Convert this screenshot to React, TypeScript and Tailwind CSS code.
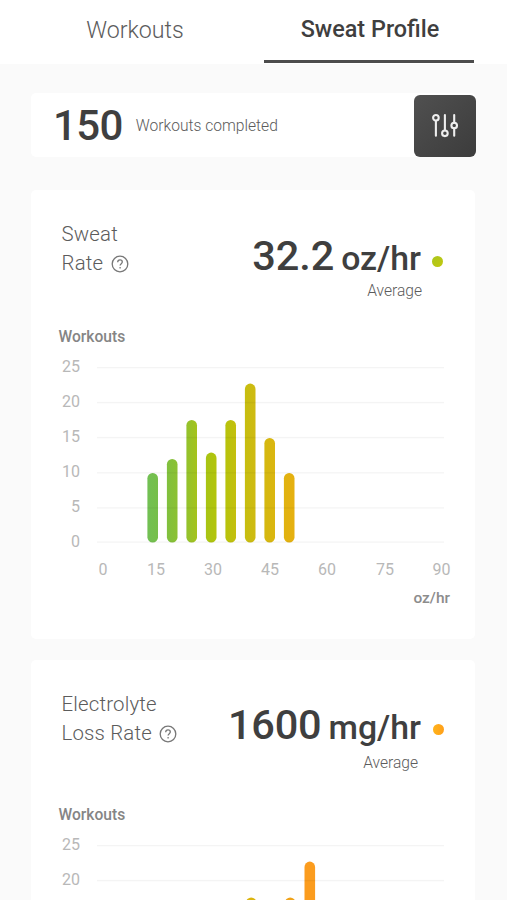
import React from "react";

type Bar = { x: number; top: number; from: string; to: string };

const sweatBars: Bar[] = [
  { x: 50.4, top: 106, from: "#72c054", to: "#76bf4a" },
  { x: 69.9, top: 92, from: "#80c03f", to: "#8cc132" },
  { x: 89.4, top: 53, from: "#93c22e", to: "#a5c31c" },
  { x: 108.9, top: 85.6, from: "#a8c414", to: "#b3c40c" },
  { x: 128.4, top: 53, from: "#b7c30c", to: "#c4bf0e" },
  { x: 147.9, top: 16.6, from: "#c6be10", to: "#cfba12" },
  { x: 167.4, top: 71, from: "#d4b810", to: "#dbb610" },
  { x: 186.9, top: 106, from: "#e0b310", to: "#e6b010" },
];

const electrolyteBars: Bar[] = [
  { x: 148.9, top: 52.5, from: "#dcb50f", to: "#dcb50f" },
  { x: 187.9, top: 52.5, from: "#f0a31a", to: "#f0a31a" },
  { x: 207.5, top: 16.6, from: "#fb9c1e", to: "#fb9c1e" },
];

function HelpIcon() {
  return (
    <svg className="h-[18px] w-[18px]" viewBox="0 0 18 18" fill="none" stroke="#777" strokeWidth="1.3">
      <circle cx="9" cy="9" r="7.8" />
      <path d="M6.7 7.2c0-1.4.9-2.3 2.3-2.3s2.3.8 2.3 2.1c0 1.6-2.2 1.8-2.2 3.6" />
      <path d="M9.1 12v1.4" />
    </svg>
  );
}

function SlidersIcon() {
  return (
    <svg className="h-7 w-7" viewBox="0 0 28 28" fill="none" stroke="#eee" strokeWidth="2.1" strokeLinecap="round">
      <circle cx="4.9" cy="5.8" r="2.8" />
      <path d="M4.9 8.8v15" />
      <circle cx="13.9" cy="21.3" r="2.8" />
      <path d="M13.9 3v15.3" />
      <circle cx="23.2" cy="13.5" r="2.8" />
      <path d="M23.2 3v7.6M23.2 16.4v7.4" />
    </svg>
  );
}

function Plot({ id, bars }: { id: string; bars: Bar[] }) {
  return (
    <svg className="block h-[178px] w-[347px]" viewBox="0 0 347 178">
      <defs>
        {bars.map((b, i) => (
          <linearGradient key={i} id={`${id}-${i}`} x1="0" x2="1" y1="0" y2="0">
            <stop offset="0" stopColor={b.from} />
            <stop offset="1" stopColor={b.to} />
          </linearGradient>
        ))}
      </defs>
      {bars.map((b, i) => (
        <rect key={i} x={b.x} y={b.top} width="10.6" height={175.5 - b.top} rx="5.3" fill={`url(#${id}-${i})`} />
      ))}
      {[0.5, 35.5, 70.5, 105.7, 140.8, 175].map((y) => (
        <rect key={y} x="0" y={y - 0.6} width="347" height="1.4" fill="#000" fillOpacity="0.045" />
      ))}
    </svg>
  );
}

type CardProps = {
  id: string;
  title: [string, string];
  value: React.ReactNode;
  unit: string;
  dot: React.ReactNode;
  average: React.ReactNode;
  heading: React.ReactNode;
  ticks: number[];
  axis?: React.ReactNode;
  bars: Bar[];
};

function MetricCard({ id, title, value, unit, dot, average, heading, ticks, axis, bars }: CardProps) {
  return (
    <section className="h-[449px] w-[444px] shrink-0 rounded-[5px] bg-white">
      <div className="flex h-[132px] justify-between pl-[30.5px] pt-[30px]">
        <div className="text-[20.4px] font-light leading-[29px] tracking-[0.18px] text-[#5c5c5c]">
          <div>{title[0]}</div>
          <div className="flex items-center gap-[7.5px]">
            {title[1]}
            <HelpIcon />
          </div>
        </div>
        <div className="flex flex-col items-end">
          <div className="flex">
            <div className="flex items-baseline gap-[7px] leading-[50px] text-[#3f3f3f]">
              {value}
              <span className="text-[33.8px] font-medium">{unit}</span>
            </div>
            {dot}
          </div>
          {average}
        </div>
      </div>
      {heading}
      <div className="flex">
        <div className="-mt-[10px] w-[49px] text-right text-[16px] leading-[20px] text-[#b8b8b8]">
          {ticks.map((n) => (
            <div key={n} className="mb-[15.1px]">{n}</div>
          ))}
        </div>
        <div className="ml-[17px] w-[347px]">
          <Plot id={id} bars={bars} />
          {axis}
        </div>
      </div>
    </section>
  );
}

function SweatAxis() {
  return (
    <>
      <div className="-ml-[12px] mt-[15px] flex w-[375px] text-center text-[16px] leading-[20px] text-[#b8b8b8]">
        <span className="w-[36px]">0</span>
        <span className="ml-[17px] w-[36px]">15</span>
        <span className="ml-[21px] w-[36px]">30</span>
        <span className="ml-[21px] w-[36px]">45</span>
        <span className="ml-[21px] w-[36px]">60</span>
        <span className="ml-[22px] w-[36px]">75</span>
        <span className="ml-[20.5px] w-[36px]">90</span>
      </div>
      <div className="-mr-[6px] mt-[8px] text-right text-[15.5px] font-medium leading-[20px] text-[#8c8c8c]">oz/hr</div>
    </>
  );
}

export default function App() {
  return (
    <div className="flex h-[900px] w-[507px] flex-col overflow-hidden bg-[#fafafa] font-['Roboto',sans-serif]">
      <header className="flex h-[64px] shrink-0 bg-white pl-[30px]">
        <div className="flex h-[60px] w-[210px] items-center justify-center text-[23.2px] font-light text-[#5c5c5c]">
          Workouts
        </div>
        <div className="ml-[24px] flex h-[63px] w-[210px] items-center justify-center border-b-[3px] border-[#4c4c4c] pl-[2px] text-[23.4px] font-medium text-[#3f3f3f]">
          Sweat Profile
        </div>
      </header>
      <main className="flex flex-col pl-[31px] pt-[29px]">
        <div className="flex h-[64px] w-[445px] shrink-0 items-center rounded-[5px] bg-white pl-[22px]">
          <span className="text-[42px] font-medium tracking-[-0.6px] text-[#3f3f3f]">150</span>
          <span className="ml-[13px] mt-[3px] text-[15.6px] font-light text-[#5c5c5c]">Workouts completed</span>
          <button className="ml-auto mt-px flex h-[62px] w-[62px] items-center justify-center rounded-[6px] bg-linear-to-br from-[#505050] to-[#3c3c3c]">
            <SlidersIcon />
          </button>
        </div>
        <div className="mt-[33px] flex flex-col gap-[21px]">
          <MetricCard
            id="sweat"
            title={["Sweat", "Rate"]}
            value={<span className="mt-[11px] text-[41.5px] font-medium tracking-[-0.1px]">32.2</span>}
            unit="oz/hr"
            dot={<span className="ml-[11px] mr-[32px] mt-[36px] h-[11px] w-[11px] rounded-full bg-linear-to-br from-[#a9c61d] to-[#c2c80c]" />}
            average={<div className="mr-[53px] -mt-[3px] text-[15.6px] font-light leading-[20px] text-[#5c5c5c]">Average</div>}
            heading={<div className="h-[45px] pl-[27.5px] pt-[5px] text-[15.6px] font-medium leading-[20px] text-[#858585]">Workouts</div>}
            ticks={[25, 20, 15, 10, 5, 0]}
            axis={<SweatAxis />}
            bars={sweatBars}
          />
          <MetricCard
            id="electrolyte"
            title={["Electrolyte", "Loss Rate"]}
            value={<span className="mt-[10px] text-[41.5px] font-medium tracking-[-0.2px]">1600</span>}
            unit="mg/hr"
            dot={<span className="ml-[12px] mr-[31px] mt-[34px] h-[11px] w-[11px] rounded-full bg-linear-to-r from-[#ffb31a] to-[#ff9f1a]" />}
            average={<div className="mr-[57px] text-[15.6px] font-light leading-[20px] text-[#5c5c5c]">Average</div>}
            heading={<div className="h-[53px] pl-[27.5px] pt-[13px] text-[15.6px] font-medium leading-[20px] text-[#858585]">Workouts</div>}
            ticks={[25, 20]}
            bars={electrolyteBars}
          />
        </div>
      </main>
    </div>
  );
}
